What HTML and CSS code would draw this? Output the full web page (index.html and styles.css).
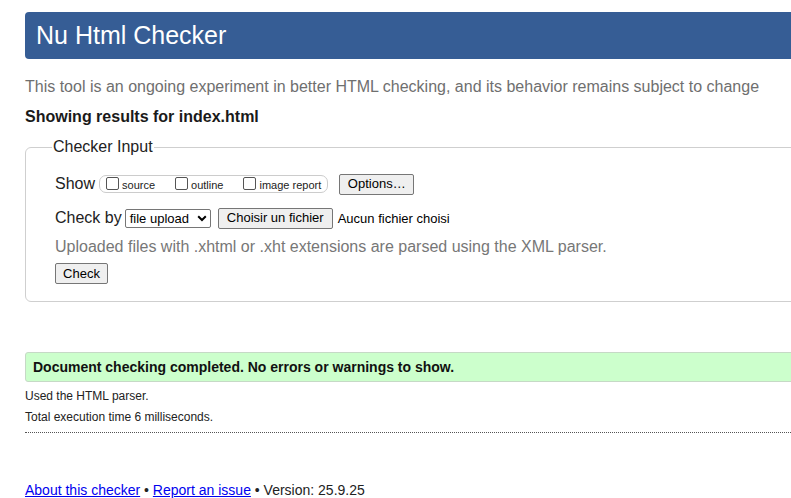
FILE: index.html
```html
<!DOCTYPE html>
<html lang="en">
<head>
<meta charset="utf-8">
<title>Nu Html Checker</title>
<link rel="stylesheet" href="styles.css">
</head>
<body>
<div class="page">
  <h1 class="title">Nu Html Checker</h1>
  <p class="intro">This tool is an ongoing experiment in better HTML checking, and its behavior remains subject to change</p>
  <p class="showing">Showing results for index.html</p>
  <fieldset class="input">
    <legend class="legend">Checker Input</legend>
    <div class="row show-row">
      <span class="lbl">Show</span>
      <span class="group">
        <label class="opt"><span class="box"></span>source</label>
        <label class="opt"><span class="box"></span>outline</label>
        <label class="opt"><span class="box"></span>image report</label>
      </span>
      <button class="btn opts">Options…</button>
    </div>
    <div class="row check-row">
      <span class="lbl">Check by</span>
      <span class="select">file upload<svg class="chev" width="10" height="7" viewBox="0 0 10 7"><path d="M1.2 1.3 L5 5 L8.8 1.3" fill="none" stroke="#000" stroke-width="2"/></svg></span>
      <button class="btn file">Choisir un fichier</button>
      <span class="nofile">Aucun fichier choisi</span>
    </div>
    <p class="note">Uploaded files with .xhtml or .xht extensions are parsed using the XML parser.</p>
    <button class="btn check">Check</button>
  </fieldset>
  <div class="success">Document checking completed. No errors or warnings to show.</div>
  <p class="small">Used the HTML parser.</p>
  <p class="small">Total execution time 6 milliseconds.</p>
  <div class="dots"></div>
  <p class="footer"><a href="#">About this checker</a> • <a href="#">Report an issue</a> • Version: 25.9.25</p>
</div>
</body>
</html>
```
FILE: styles.css
```css
html, body { overflow: hidden; }
body {
  margin: 0;
  font-family: "Liberation Sans", Arial, sans-serif;
  color: #111;
  background: #fff;
}
.page {
  width: 830px;
  padding: 12px 0 0 25px;
}
.title {
  margin: 0;
  height: 47px;
  box-sizing: border-box;
  padding: 8px 0 0 11px;
  background: #365d95;
  color: #fff;
  font-weight: normal;
  font-size: 25px;
  line-height: 30px;
  border-radius: 4px;
}
.intro {
  margin: 19px 0 0;
  font-size: 16px;
  line-height: 18px;
  color: #6f6f6f;
}
.showing {
  margin: 12px 0 0;
  font-size: 16px;
  line-height: 18px;
  font-weight: bold;
  color: #1a1a1a;
}
.input {
  margin: 12px 0 0;
  padding: 18px 28px 15px 29px;
  border: 1px solid #cfcfcf;
  border-radius: 6px;
  height: 164px;
  box-sizing: border-box;
  min-width: 0;
}
.legend {
  padding: 0 1px;
  margin-left: -3px;
  font-size: 16px;
  line-height: 18px;
  color: #222;
}
.row {
  display: flex;
  align-items: center;
}
.show-row { height: 20px; }
.lbl {
  font-size: 16px;
  color: #222;
  margin-right: 4px;
}
.group {
  display: inline-flex;
  align-items: center;
  height: 18px;
  box-sizing: border-box;
  border: 1px solid #ccc;
  border-radius: 7px;
  padding: 0 6px 0 6px;
  white-space: nowrap;
}
.opt {
  display: inline-flex;
  align-items: center;
  font-size: 11px;
  color: #222;
  margin-right: 20px;
  padding-top: 2px;
  white-space: nowrap;
}
.opt:last-child { margin-right: 0; }
.box {
  width: 11px;
  height: 11px;
  border: 1px solid #555;
  border-radius: 2px;
  margin-right: 3px;
  margin-top: -4px;
  background: #fff;
}
.btn {
  font-family: "Liberation Sans", Arial, sans-serif;
  font-size: 13px;
  color: #000;
  background: #efefef;
  border: 1px solid #767676;
  border-radius: 2px;
  padding: 0 6px;
  height: 20px;
  line-height: 18px;
  white-space: nowrap;
}
.opts { margin-left: 11px; width: 75px; height: 21px; }
.check-row { margin-top: 13px; height: 22px; }
.check-row .lbl { margin-right: 3px; }
.select {
  display: inline-flex;
  align-items: center;
  font-size: 13px;
  color: #000;
  height: 19px;
  box-sizing: border-box;
  border: 1px solid #767676;
  border-radius: 2px;
  padding: 0 3px 0 4px;
  width: 86px;
  justify-content: space-between;
}
.chev { margin-top: 1px; }
.file { margin-left: 7px; width: 115px; height: 21px; padding: 0; }
.nofile { font-size: 13px; color: #000; margin-left: 5px; }
.note {
  margin: 9px 0 0;
  font-size: 16px;
  line-height: 18px;
  color: #777;
}
.check { margin-top: 7px; width: 53px; height: 21px; padding: 0; }
.success {
  margin-top: 50px;
  height: 30px;
  box-sizing: border-box;
  background: #ccffcc;
  border: 1px solid #c6d9c6;
  border-radius: 3px;
  padding: 6px 0 0 7px;
  font-size: 14px;
  font-weight: bold;
  color: #111;
}
.small {
  margin: 7px 0 0;
  font-size: 12px;
  line-height: 14px;
  color: #222;
}
.dots {
  margin-top: 8px;
  border-top: 1px dotted #555;
}
.footer {
  margin: 49px 0 0;
  font-size: 14px;
  line-height: 16px;
  color: #222;
}
.footer a { color: #0000ee; }
```
